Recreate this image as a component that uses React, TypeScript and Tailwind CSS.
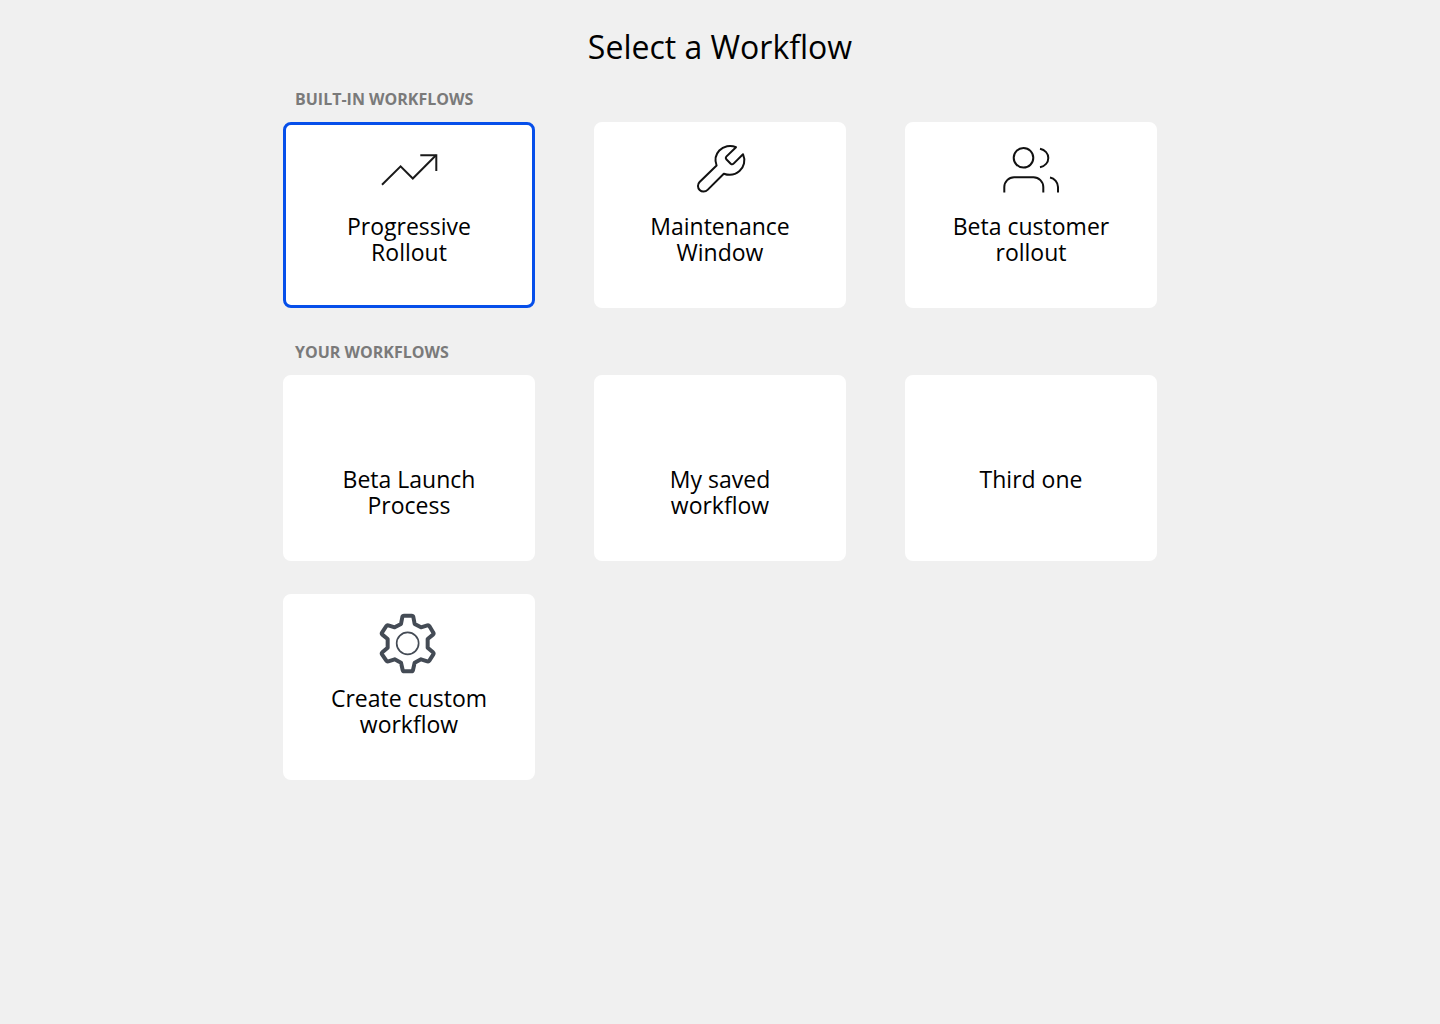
import { useState, type ReactNode } from "react";

function TrendIcon() {
  return (
    <svg viewBox="369 125 80 80" className="size-20" fill="none" stroke="#1a1a1a" strokeWidth="2" aria-hidden="true">
      <path d="M382 184.8 400.6 166.3 412.8 178.5 436 155.3" strokeLinejoin="miter" />
      <path d="M420.3 155.3H436.3V171" />
    </svg>
  );
}

function WrenchIcon() {
  return (
    <svg viewBox="680 125 80 80" className="size-20" fill="none" stroke="#111111" strokeWidth="2" strokeLinejoin="round" aria-hidden="true">
      <path d="M736 147.2 726.3 156.6Q725.2 158 726.3 159.3L730.7 163.7Q732.2 165 733.6 163.6L743 154.2C745.8 160.5 744 167 739.5 171C735.3 174.8 729.5 175.7 723.8 173.7L707.6 189.9A5.6 5.6 0 0 1 699.6 182L716.6 165.5C714.5 160 715.6 154.5 719.3 150.5C723.5 146 730.2 144.6 736 147.2Z" />
    </svg>
  );
}

function UsersIcon() {
  return (
    <svg viewBox="991 125 80 80" className="size-20" fill="none" stroke="#111111" strokeWidth="2" aria-hidden="true">
      <circle cx="1023.5" cy="157.8" r="9.8" />
      <path d="M1040 148.7C1045 149.8 1048.3 153.5 1048.3 158S1045 166.200 1040 167.300" />
      <path d="M1004.3 192.5V187A9.8 9.8 0 0 1 1014.1 177.3H1033.5A9.8 9.8 0 0 1 1043.3 187V192.5" />
      <path d="M1050 177.5A9.8 9.8 0 0 1 1058 187V192.5" />
    </svg>
  );
}

function GearIcon() {
  return (
    <svg viewBox="6 -21 240 240" className="size-20" fill="none" stroke="#444b55" strokeLinejoin="round" aria-hidden="true">
      <path
        strokeWidth="12"
        d="M111 35H134Q138 35 139 39L143 60 162 70 181 64Q185 63 187 66L199 86Q201 89 198 92L182 105V131L198 145Q201 148 199 151L187 170Q185 173 181 172L162 166 143 176 138 198Q137 202 133 202H112Q108 202 107 198L102 176 83 166 64 172Q60 173 58 170L45 151Q43 148 46 145L62 131V105L46 92Q43 89 45 86L58 66Q60 63 64 64L83 70 102 60 106 39Q107 35 111 35Z"
      />
      <circle cx="122" cy="118" r="33" strokeWidth="5" />
    </svg>
  );
}

type Workflow = { name: string; icon?: ReactNode };

const builtIn: Workflow[] = [
  { name: "Progressive Rollout", icon: <TrendIcon /> },
  { name: "Maintenance Window", icon: <WrenchIcon /> },
  { name: "Beta customer rollout", icon: <UsersIcon /> },
];

const saved: Workflow[] = [
  { name: "Beta Launch Process" },
  { name: "My saved workflow" },
  { name: "Third one" },
  { name: "Create custom workflow", icon: <GearIcon /> },
];

function Section({
  title,
  items,
  selected,
  onSelect,
}: {
  title: string;
  items: Workflow[];
  selected: string;
  onSelect: (name: string) => void;
}) {
  return (
    <section>
      <h2 className="px-3 pb-[13px] text-[16px] leading-5 font-bold text-[#7a7a7a] uppercase">{title}</h2>
      <div className="grid grid-cols-3 gap-x-[59px] gap-y-[33px]">
        {items.map(({ name, icon }) => (
          <button
            key={name}
            type="button"
            aria-pressed={selected === name}
            onClick={() => onSelect(name)}
            className={`flex min-h-[186px] cursor-pointer flex-col items-center rounded-lg border-3 bg-white px-10 ${
              selected === name ? "border-[#064fea]" : "border-white"
            }`}
          >
            <span className="h-20">{icon}</span>
            <span className="pt-2 text-center text-[23px] leading-[26px]">{name}</span>
          </button>
        ))}
      </div>
    </section>
  );
}

export default function App() {
  const [selected, setSelected] = useState("Progressive Rollout");
  return (
    <main className="min-h-screen bg-[#f0f0f0] px-6 pt-[27px] pb-12 font-['Open_Sans',sans-serif] text-black">
      <div className="mx-auto max-w-[874px]">
        <h1 className="pb-[22px] text-center text-[32px] leading-10">Select a Workflow</h1>
        <div className="flex flex-col gap-[34px]">
          <Section title="Built-in Workflows" items={builtIn} selected={selected} onSelect={setSelected} />
          <Section title="Your Workflows" items={saved} selected={selected} onSelect={setSelected} />
        </div>
      </div>
    </main>
  );
}
